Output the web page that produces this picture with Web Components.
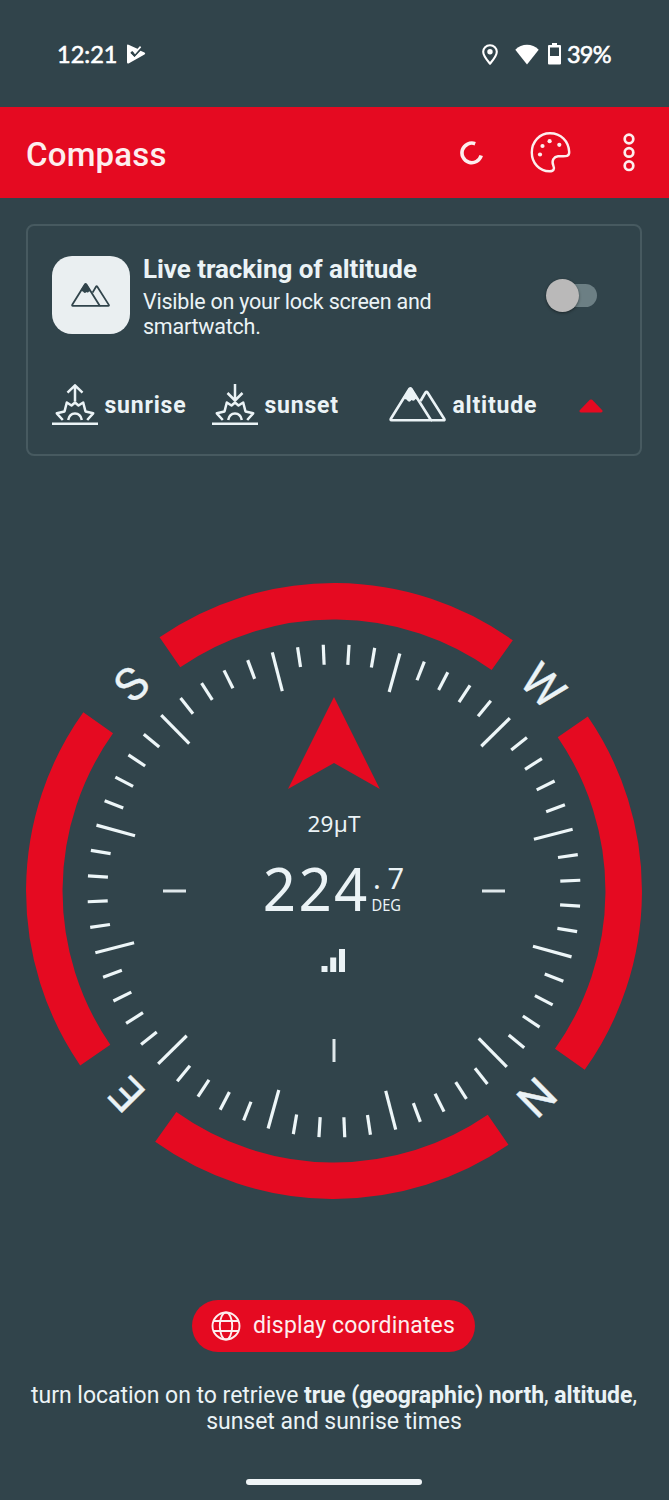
<!DOCTYPE html>
<html lang="en">
<head>
<meta charset="utf-8">
<title>Compass</title>
<style>
  body {
    --bg: #31444b;
    --fg: #ebf3f6;
    --accent: #e50a21;
    margin: 0;
    background: var(--bg);
    color: var(--fg);
    font-family: Roboto, sans-serif;
  }
</style>
</head>
<body>
<compass-app></compass-app>

<script>
// Small base class: clones the static template into an open shadow root
class BaseElement extends HTMLElement {
  constructor() {
    super();
    const template = document.createElement('template');
    template.innerHTML = this.constructor.markup;
    this.attachShadow({ mode: 'open' });
    this.shadowRoot.appendChild(template.content.cloneNode(true));
  }
}

class StatusBar extends BaseElement {
  static markup = `
    <style>
      :host {
        display: flex;
        justify-content: space-between;
        align-items: center;
        box-sizing: border-box;
        height: 107px;
        padding: 1px 58px 0 57px;
        color: #fff;
        font: 400 23.5px/28px Lato, sans-serif;
        -webkit-text-stroke: 0.6px #fff;
      }
      div { display: flex; align-items: center; }
      svg { display: block; fill: #fff; }
      .time { width: 70px; }
      .battery { margin: 0 6px 0 9px; }
      .wifi { margin-left: 17px; }
      .percent { width: 44px; letter-spacing: -0.8px; white-space: nowrap; }
    </style>
    <div>
      <span class="time">12:21</span>
      <svg width="19" height="20" viewBox="0 0 19 20">
        <path d="M0 1.6Q0 0 1.5.7L11.500 5.200 7.500 9.200 5.200 7 3.400 8.800 7.500 12.900 13.500 6.800 17.500 8.600Q19 9.600 17.500 10.600L2 19.200Q0 20 0 18.200Z"/>
        <path d="M4.300 8.200L7.500 11.200 14 3.500" fill="none" stroke="#31444b" stroke-width="2"/>
        <path d="M7.500 9.600L13.600 2.600" fill="none" stroke="#fff" stroke-width="1.600"/>
      </svg>
    </div>
    <div>
      <svg width="16" height="21" viewBox="0 0 16 21">
        <path d="M8 1.200C4 1.200 1.200 4.200 1.200 7.800 1.200 12 5 16 8 19.600 11 16 14.800 12 14.800 7.800 14.800 4.200 12 1.200 8 1.200Z" fill="none" stroke="#fff" stroke-width="2.100"/>
        <circle cx="8" cy="7.800" r="2.700"/>
      </svg>
      <svg class="wifi" width="24" height="21" viewBox="0 0 24 21"><path d="M12 20.500L.3 5.700C6.500-.9 17.500-.9 23.700 5.700Z"/></svg>
      <svg class="battery" width="13" height="22" viewBox="0 0 13 22">
        <path fill-rule="evenodd" d="M4 0h5v2h3q1 0 1 1v17.500q0 1-1 1H1q-1 0-1-1V3q0-1 1-1h3zM2 4.500V13h9V4.500z"/>
      </svg>
      <span class="percent">39%</span>
    </div>`;
}

class AppBar extends BaseElement {
  static markup = `
    <style>
      :host {
        display: flex;
        align-items: center;
        box-sizing: border-box;
        height: 91px;
        padding: 0 33px 0 26px;
        background: var(--accent);
        color: #fdeeee;
      }
      h1 { flex: 1; margin: 3px 0 0; font-size: 33px; font-weight: 500; letter-spacing: 0.2px; }
      svg { display: block; fill: none; stroke: currentColor; }
      .palette { margin: 0 51.5px 0 46px; }
    </style>
    <h1><slot></slot></h1>
    <svg width="24" height="24" viewBox="0 0 24 24" stroke-width="3.600"><path d="M15.200 2.700A9.800 9.800 0 1 0 21.200 14.600"/></svg>
    <svg class="palette" width="41" height="41" viewBox="0 0 41 41" stroke-width="2.400">
      <path d="M20 1.300C9.500 1.300 1.800 9.800 1.800 20.500S9.500 39.300 19.500 39.300C24 39.300 24.700 36.700 23.300 33.500 21.200 28.500 24 24.700 28 24.300 33 23.800 39.400 26 39.200 20 38.700 9 31 1.300 20 1.300Z"/>
      <g fill="currentColor" stroke="none"><circle cx="10" cy="22.500" r="2.100"/><circle cx="12.500" cy="14" r="2.100"/><circle cx="19.600" cy="9.200" r="2.100"/><circle cx="29.300" cy="12.800" r="2.100"/></g>
    </svg>
    <svg width="14" height="40" viewBox="0 0 14 40" stroke-width="2.700"><circle cx="7" cy="6" r="4.300"/><circle cx="7" cy="19.400" r="4.300"/><circle cx="7" cy="32.700" r="4.300"/></svg>`;
}

// Two overlapping peaks, the front one with a snow cap
class MountainIcon extends BaseElement {
  static markup = `
    <style>
      :host { display: block; width: 57px; }
      svg { display: block; width: 100%; fill: none; stroke: currentColor; stroke-width: 2.600; stroke-linejoin: round; }
    </style>
    <svg viewBox="0 0 57 36">
      <path d="M20.500 1.800Q21.500 1 22.500 2.200L42 33.300H2.600Q1 33.300 2 31.500Z"/>
      <path d="M31.500 14L36.500 5.500Q37.500 4 38.500 5.500L55.300 32Q56 33.300 54.500 33.300H42"/>
      <path fill="currentColor" stroke="none" d="M20 1.500Q21.500 0 23 1.500L30 13 26.500 12Q25 15 22.500 13 20 16.500 17.500 12.500L13.500 11.500Z"/>
    </svg>`;
}

class SunIcon extends BaseElement {
  static markup = `
    <style>
      :host { display: block; width: 46px; }
      svg { display: block; fill: none; stroke: currentColor; stroke-width: 2.500; stroke-linejoin: round; }
      .down, :host([down]) .up { display: none; }
      :host([down]) .down { display: inline; }
    </style>
    <svg width="46" height="42" viewBox="0 0 46 42">
      <path class="up" d="M23 17.500V1.500M15.500 8.700L23 1.300 30.500 8.700"/>
      <path class="down" d="M23 0V16M15.500 9L23 16.500 30.500 9"/>
      <path d="M10.800 36L4.800 29.300 12.500 27.500 14.800 18.500 19.500 21.500 23 18.500 26.500 21.500 31.200 18.500 33.500 27.500 41.200 29.300 35.200 36"/>
      <path d="M16.200 36C17.800 27.300 28.200 27.300 29.800 36"/>
      <path d="M0 39.800H46"/>
    </svg>`;
}

class ToggleSwitch extends BaseElement {
  static markup = `
    <style>
      :host { display: flex; align-items: center; width: 50px; height: 23px; border-radius: 12px; background: #6c7f84; }
      span { width: 33px; height: 33px; margin-left: -1px; border-radius: 50%; background: #bab9b9; box-shadow: 0 1px 3px rgba(0, 0, 0, .45); }
    </style>
    <span></span>`;
}

class TrackingCard extends BaseElement {
  static markup = `
    <style>
      :host {
        display: block;
        box-sizing: border-box;
        height: 232px;
        margin: 26px 27px 0 26px;
        padding: 30px 37px 0 24px;
        border: 2px solid #475a60;
        border-radius: 8px;
      }
      .top { display: grid; grid-template-columns: 78px 1fr 50px; column-gap: 13px; padding-right: 6px; }
      .badge { display: grid; place-items: center; box-sizing: border-box; height: 78px; padding-right: 1px; border-radius: 20px; background: #eaeff1; color: var(--bg); }
      .badge mountain-icon { width: 39px; }
      h2 { margin: -3px 0 0; font-size: 26px; line-height: 32px; font-weight: 700; letter-spacing: -0.060px; white-space: nowrap; }
      p { margin: 4px 0 0; font-size: 21.500px; line-height: 25px; letter-spacing: -0.230px; }
      toggle-switch { margin-top: 28px; }
      .times { display: flex; align-items: center; margin: 45px 0 0 -0.5px; font-weight: 700; font-size: 23px; letter-spacing: 0.8px; }
      .times span { box-sizing: border-box; padding: 1px 0 0 7px; }
      .times svg { margin-top: 2px; }
      .sunrise { width: 114px; }
      .sunset { width: 131px; }
      .altitude { flex: 1; }
    </style>
    <div class="top">
      <div class="badge"><mountain-icon></mountain-icon></div>
      <div>
        <h2><slot name="title"></slot></h2>
        <p><slot name="description"></slot></p>
      </div>
      <toggle-switch></toggle-switch>
    </div>
    <div class="times">
      <sun-icon></sun-icon><span class="sunrise">sunrise</span>
      <sun-icon down></sun-icon><span class="sunset">sunset</span>
      <mountain-icon></mountain-icon><span class="altitude">altitude</span>
      <svg width="24" height="14" viewBox="0 0 24 14"><path fill="#e50a21" d="M10.800.8Q12 0 13.200.8L23.500 11.500Q24 13.500 22 13.500H2Q0 13.500.5 11.500Z"/></svg>
    </div>`;
}

class CompassDial extends BaseElement {
  static markup = `
    <style>
      :host { display: block; margin-top: 103px; height: 664px; }
      svg { display: block; fill: var(--fg); }
      #ticks { stroke: #edf6f8; stroke-width: 3.200; }
      #arcs { fill: none; stroke: var(--accent); stroke-width: 36.500; }
      .marks { stroke: #dfe8eb; stroke-width: 3; }
      .letters { font: 46px Roboto, sans-serif; text-anchor: middle; stroke: var(--fg); stroke-width: .3; }
      .readout { font-family: "Noto Sans", sans-serif; }
    </style>
    <svg width="669" height="664" viewBox="-334 -332 669 664">
      <g transform="rotate(.5)">
        <g id="arcs"></g>
        <g id="ticks"></g>
        <g class="letters">
          <text x=".5" y="-273.500" transform="rotate(-45)">S</text>
          <text y="-277" transform="rotate(45)">W</text>
          <text y="-273" transform="rotate(135)">N</text>
          <text y="-274" transform="rotate(225)">E</text>
        </g>
      </g>
      <path d="M0-194L45.800-102 0-128-46-102Z" fill="#e50a21"/>
      <path class="marks" d="M-171 0h23M148 0h23M0 148v23"/>
      <g class="readout">
        <text x="-26.500" y="-59" font-size="22.500" textLength="53">29µT</text>
        <text x="-71.500" y="20" font-size="60" textLength="108" transform="translate(-2) scale(.97 1)">224</text>
        <text x="39" y="-2" font-size="29" textLength="31">.7</text>
        <text x="37.500" y="20" font-size="15.500" textLength="29.500" lengthAdjust="spacingAndGlyphs">DEG</text>
      </g>
      <path d="M-12.500 75h6v6h-6zM-3.800 66.500h6V81h-6zM5 58h6v23H5z"/>
    </svg>`;

  connectedCallback() {
    this._drawArcs();
    this._drawTicks();
  }

  // Four 70 degree segments, the gaps hold the letters
  _drawArcs() {
    const r = 289.7;
    const a = 35 * Math.PI / 180;
    const x = r * Math.sin(a);
    const y = -r * Math.cos(a);
    let out = '';
    for (let i = 0; i < 4; i++) {
      out += `<path transform="rotate(${i * 90})" d="M${-x} ${y}A${r} ${r} 0 0 1 ${x} ${y}"/>`;
    }
    this.shadowRoot.getElementById('arcs').innerHTML = out;
  }

  // A tick every 6 degrees, every fifth one is long
  _drawTicks() {
    let out = '';
    for (let i = 0; i < 60; i++) {
      const inner = i % 5 === 0 ? -206.5 : -226.5;
      out += `<line y1="-246.5" y2="${inner}" transform="rotate(${15 + i * 6})"/>`;
    }
    this.shadowRoot.getElementById('ticks').innerHTML = out;
  }
}

class PillButton extends BaseElement {
  static markup = `
    <style>
      :host { display: block; }
      button {
        display: flex;
        align-items: center;
        gap: 12px;
        width: 283px;
        height: 52px;
        padding: 0 0 1px 19px;
        border: 0;
        border-radius: 26px;
        background: var(--accent);
        color: #fdeeee;
        font: 23px Roboto, sans-serif;
        letter-spacing: 0.15px;
        white-space: nowrap;
      }
      svg { fill: none; stroke: currentColor; stroke-width: 1.900; }
    </style>
    <button>
      <svg width="30" height="30" viewBox="0 0 30 30">
        <circle cx="15" cy="15" r="13.500"/><ellipse cx="15" cy="15" rx="6.200" ry="13.500"/><path d="M2.500 10h25M2.500 20h25"/>
      </svg>
      <slot></slot>
    </button>`;
}

class CompassApp extends BaseElement {
  static markup = `
    <style>
      :host { display: flex; flex-direction: column; width: 669px; height: 1500px; overflow: hidden; }
      pill-button { margin: 77px 0 0 192px; }
      .hint { margin: 31px 1px 0 0; text-align: center; font-size: 23px; line-height: 26px; letter-spacing: -0.020px; white-space: nowrap; }
      .home { width: 176px; height: 6px; margin: 44px 0 0 246px; border-radius: 3px; background: #f0f5f7; }
    </style>
    <status-bar></status-bar>
    <app-bar>Compass</app-bar>
    <tracking-card>
      <span slot="title">Live tracking of altitude</span>
      <span slot="description">Visible on your lock screen and<br>smartwatch.</span>
    </tracking-card>
    <compass-dial></compass-dial>
    <pill-button>display coordinates</pill-button>
    <p class="hint">turn location on to retrieve <b>true (geographic) north</b>, <b>altitude</b>,<br>sunset and sunrise times</p>
    <div class="home"></div>`;
}

customElements.define('status-bar', StatusBar);
customElements.define('app-bar', AppBar);
customElements.define('mountain-icon', MountainIcon);
customElements.define('sun-icon', SunIcon);
customElements.define('toggle-switch', ToggleSwitch);
customElements.define('tracking-card', TrackingCard);
customElements.define('compass-dial', CompassDial);
customElements.define('pill-button', PillButton);
customElements.define('compass-app', CompassApp);
</script>
</body>
</html>
